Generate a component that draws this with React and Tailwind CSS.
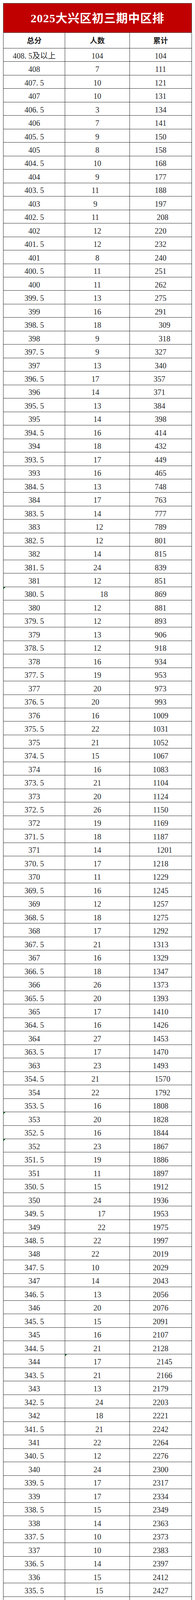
const ROWS = [
  ['408.5及以上', '104', '104'],
  ['408', '7', '111'],
  ['407.5', '10', '121'],
  ['407', '10', '131'],
  ['406.5', '3', '134'],
  ['406', '7', '141'],
  ['405.5', '9', '150'],
  ['405', '8', '158'],
  ['404.5', '10', '168'],
  ['404', '9', '177'],
  ['403.5', '11', '188', { b: 'L' }],
  ['403', '9', '197', { b: 'L' }],
  ['402.5', '11', '208', { b: 'L', c: 'R' }],
  ['402', '12', '220'],
  ['401.5', '12', '232'],
  ['401', '8', '240'],
  ['400.5', '11', '251'],
  ['400', '11', '262'],
  ['399.5', '13', '275'],
  ['399', '16', '291'],
  ['398.5', '18', '309', { c: 'RR' }],
  ['398', '9', '318', { c: 'RR' }],
  ['397.5', '9', '327'],
  ['397', '13', '340'],
  ['396.5', '17', '357', { b: 'L', c: 'l' }],
  ['396', '14', '371', { b: 'L', c: 'l' }],
  ['395.5', '13', '384', { c: 'l' }],
  ['395', '14', '398'],
  ['394.5', '16', '414'],
  ['394', '18', '432'],
  ['393.5', '17', '449'],
  ['393', '16', '465'],
  ['384.5', '13', '748'],
  ['384', '17', '763'],
  ['383.5', '14', '777'],
  ['383', '12', '789', { b: 'R' }],
  ['382.5', '12', '801', { b: 'R' }],
  ['382', '14', '815'],
  ['381.5', '24', '839'],
  ['381', '12', '851'],
  ['380.5', '18', '869', { b: 'RRR', g: 1 }],
  ['380', '12', '881'],
  ['379.5', '12', '893'],
  ['379', '13', '906'],
  ['378.5', '12', '918'],
  ['378', '16', '934'],
  ['377.5', '19', '953'],
  ['377', '20', '973'],
  ['376.5', '20', '993', { b: 'L' }],
  ['376', '16', '1009', { b: 'L' }],
  ['375.5', '22', '1031', { b: 'L' }],
  ['375', '21', '1052', { b: 'L' }],
  ['374.5', '15', '1067', { b: 'L' }],
  ['374', '16', '1083'],
  ['373.5', '21', '1104'],
  ['373', '20', '1124'],
  ['372.5', '26', '1150'],
  ['372', '19', '1169'],
  ['371.5', '18', '1187'],
  ['371', '14', '1201', { c: 'RR' }],
  ['370.5', '17', '1218'],
  ['370', '11', '1229'],
  ['369.5', '16', '1245'],
  ['369', '12', '1257'],
  ['368.5', '18', '1275'],
  ['368', '17', '1292'],
  ['367.5', '21', '1313'],
  ['367', '16', '1329'],
  ['366.5', '18', '1347'],
  ['366', '26', '1373'],
  ['365.5', '20', '1393'],
  ['365', '17', '1410'],
  ['364.5', '16', '1426'],
  ['364', '27', '1453'],
  ['363.5', '17', '1470'],
  ['363', '23', '1493'],
  ['354.5', '21', '1570', { b: 'L', c: 'R' }],
  ['354', '22', '1792', { b: 'L', c: 'R' }],
  ['353.5', '16', '1808'],
  ['353', '20', '1828', { g: 1 }],
  ['352.5', '16', '1844'],
  ['352', '23', '1867', { g: 1 }],
  ['351.5', '19', '1886'],
  ['351', '11', '1897'],
  ['350.5', '15', '1912'],
  ['350', '24', '1936'],
  ['349.5', '17', '1953', { b: 'R2' }],
  ['349', '22', '1975', { b: 'R2' }],
  ['348.5', '22', '1997'],
  ['348', '22', '2019', { b: 'L' }],
  ['347.5', '10', '2029', { b: 'L' }],
  ['347', '14', '2043', { b: 'L' }],
  ['346.5', '13', '2056'],
  ['346', '20', '2076'],
  ['345.5', '15', '2091'],
  ['345', '16', '2107'],
  ['344.5', '21', '2128'],
  ['344', '17', '2145', { c: 'RR', g: 2 }],
  ['343.5', '21', '2166', { c: 'RR' }],
  ['343', '13', '2179'],
  ['342.5', '24', '2203', { b: 'R' }],
  ['342', '18', '2221', { b: 'R' }],
  ['341.5', '21', '2242', { b: 'R' }],
  ['341', '22', '2264'],
  ['340.5', '12', '2276'],
  ['340', '24', '2300'],
  ['339.5', '17', '2317'],
  ['339', '17', '2334'],
  ['338.5', '15', '2349'],
  ['338', '14', '2363'],
  ['337.5', '10', '2373'],
  ['337', '10', '2383'],
  ['336.5', '14', '2397'],
  ['336', '15', '2412'],
  ['335.5', '15', '2427', { b: 'R' }],
  ['335', '12', '2439', { b: 'R' }],
  ['334.5', '24', '2463', { b: 'R' }],
  ['334', '14', '2477', { c: 'R' }],
  ['333.5', '18', '2495', { c: 'R' }],
  ['333', '18', '2513'],
  ['332.5', '17', '2530'],
  ['332', '18', '2548'],
  ['331.5', '19', '2567'],
  ['331', '15', '2582'],
  ['330.5', '19', '2601'],
  ['330', '12', '2613'],
  ['329.5', '18', '2631'],
  ['329', '15', '2646'],
  ['328.5', '18', '2664'],
  ['328', '23', '2687'],
  ['327.5', '19', '2706'],
  ['327', '18', '2724'],
  ['326.5', '16', '2740'],
  ['326', '15', '2755'],
  ['325.5', '18', '2773'],
  ['325', '18', '2791'],
  ['324.5', '16', '2807'],
  ['324', '12', '2819'],
  ['323.5', '16', '2835'],
  ['323', '12', '2847'],
  ['322.5', '18', '2865', { c: 'R' }],
  ['322', '13', '2878', { c: 'R' }],
  ['321.5', '17', '2895'],
]

// the source sheet has a few cells that are not quite centred
const SHIFT = {
  L: 'pr-[10px]',
  l: 'pr-[6px]',
  R: 'pl-[10px]',
  RR: 'pl-[20px]',
  R2: 'pl-[22px]',
  RRR: 'pl-[34px]',
}

function Num({ text }) {
  const dot = text.indexOf('.')
  if (dot < 0) return text
  return (
    <>
      {text.slice(0, dot)}
      <span className="inline-block w-[10px] text-left">.</span>
      {text.slice(dot + 1)}
    </>
  )
}

function Cell({ children, shift, flag, first, pad = 'pt-[4px]' }) {
  return (
    <td
      className={`relative p-0 ${pad} text-center align-middle border-[#2e2e2e] ${first ? '' : 'border-l'} ${shift ? SHIFT[shift] : ''}`}
    >
      {flag && (
        <span className="absolute top-0 left-0 w-0 h-0 border-t-[5px] border-r-[5px] border-t-[#1d6b2c] border-r-transparent" />
      )}
      {children}
    </td>
  )
}

export default function App() {
  return (
    <div className="bg-white w-[500px] p-[8px] font-['Liberation_Serif','Noto_Sans_CJK_SC',serif]">
      <table className="w-[484px] table-fixed border-collapse border border-[#2e2e2e]">
        <colgroup>
          <col className="w-[158px]" />
          <col className="w-[165px]" />
          <col className="w-[159px]" />
        </colgroup>
        <thead>
          <tr className="h-[75px] bg-[#c00000]">
            <th colSpan={3} className="p-0 pt-[2px] text-white text-[30px] leading-none font-bold tracking-[1px] border-b border-[#2e2e2e]">
              2025大兴区初三期中区排
            </th>
          </tr>
          <tr className="h-[40px] text-[19px] leading-[20px] font-semibold text-[#222] border-b border-[#2e2e2e]">
            <Cell first pad="pt-[2px]">总分</Cell>
            <Cell pad="pt-[2px]">人数</Cell>
            <Cell pad="pt-[2px]">累计</Cell>
          </tr>
        </thead>
        <tbody>
          {ROWS.map(([score, count, total, opt = {}]) => (
            <tr
              key={score}
              className="h-[34.47px] text-[20px] leading-[22px] text-[#2a2a2a] border-b border-[#2e2e2e]"
            >
              <Cell first flag={opt.g === 1}><Num text={score} /></Cell>
              <Cell shift={opt.b} flag={opt.g === 2}>{count}</Cell>
              <Cell shift={opt.c}>{total}</Cell>
            </tr>
          ))}
        </tbody>
      </table>
    </div>
  )
}
